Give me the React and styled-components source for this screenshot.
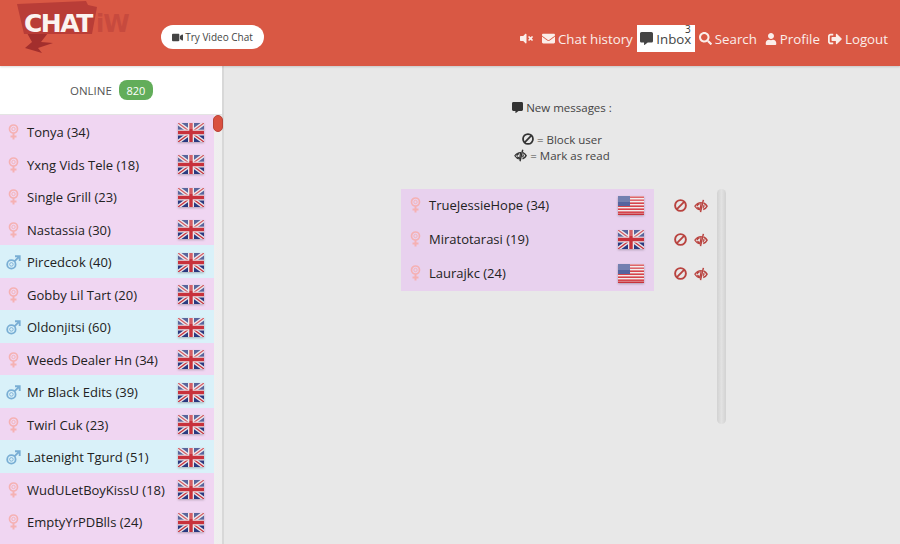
import React from "react";
import styled, { createGlobalStyle } from "styled-components";
import { FaVideo, FaEnvelope, FaCommentAlt, FaSearch, FaUser, FaSignOutAlt, FaVolumeMute } from "react-icons/fa";

const Global = createGlobalStyle`
  html, body {
    margin: 0;
    height: 100%;
    overflow: hidden;
    background: #e8e8e8;
    font-family: "Open Sans", "Noto Sans", sans-serif;
  }
`;

const users = [
  ["Tonya (34)", "f"],
  ["Yxng Vids Tele (18)", "f"],
  ["Single Grill (23)", "f"],
  ["Nastassia (30)", "f"],
  ["Pircedcok (40)", "m"],
  ["Gobby Lil Tart (20)", "f"],
  ["Oldonjitsi (60)", "m"],
  ["Weeds Dealer Hn (34)", "f"],
  ["Mr Black Edits (39)", "m"],
  ["Twirl Cuk (23)", "f"],
  ["Latenight Tgurd (51)", "m"],
  ["WudULetBoyKissU (18)", "f"],
  ["EmptyYrPDBlls (24)", "f"],
];

const inbox = [
  ["TrueJessieHope (34)", "us"],
  ["Miratotarasi (19)", "uk"],
  ["Laurajkc (24)", "us"],
];

const UkFlag = () => (
  <FlagSvg width="26" height="19" viewBox="0 0 26 19">
    <rect width="26" height="19" fill="#2b3a80" />
    <path d="M0 0L26 19M26 0L0 19" stroke="#e8e4ea" strokeWidth="4" />
    <path d="M0 0L26 19M26 0L0 19" stroke="#c8323c" strokeWidth="1.3" />
    <path d="M13 0V19M0 9.5H26" stroke="#e8e4ea" strokeWidth="6" />
    <path d="M13 0V19M0 9.5H26" stroke="#c8323c" strokeWidth="3.4" />
    <rect width="26" height="6" fill="#fff" opacity="0.22" />
  </FlagSvg>
);

const UsFlag = () => (
  <FlagSvg width="26" height="19" viewBox="0 0 26 19">
    <rect width="26" height="19" fill="#f1e9ea" />
    {[0, 3, 6, 9, 12, 15].map((y) => (
      <rect key={y} y={y + 0.4} width="26" height="1.6" fill="#d6444c" />
    ))}
    <rect y="17.4" width="26" height="1.6" fill="#c8323c" />
    <rect width="12" height="10" fill="#55649f" />
    <rect width="26" height="6" fill="#fff" opacity="0.18" />
  </FlagSvg>
);

const VenusIcon = () => (
  <svg width="11" height="16" viewBox="0 0 11 16" fill="none" stroke="#f5b1b3">
    <circle cx="5.5" cy="5" r="4" strokeWidth="1.7" />
    <circle cx="5.5" cy="5" r="1.7" strokeWidth="0.9" />
    <path d="M5.5 9V15.5M2.5 12.6H8.5" strokeWidth="2" />
  </svg>
);

const MarsIcon = () => (
  <svg width="15" height="15" viewBox="0 0 15 15" fill="none" stroke="#79aed4">
    <circle cx="5.4" cy="9.4" r="4.2" strokeWidth="1.8" />
    <circle cx="5.4" cy="9.4" r="1.8" strokeWidth="0.9" />
    <path d="M8.4 6.4L13.2 1.6M9 1.3H13.7V6" strokeWidth="1.9" />
  </svg>
);

const BanIcon = ({ size = 13 }) => (
  <svg width={size} height={size} viewBox="0 0 13 13" fill="none" stroke="currentColor" strokeWidth="1.9">
    <circle cx="6.5" cy="6.5" r="5.4" />
    <path d="M2.7 10.3L10.3 2.7" />
  </svg>
);

// half filled eye with a slash, the "mark as read" glyph
const EyeCloseIcon = ({ size = 14 }) => (
  <svg width={size} height={size} viewBox="0 0 14 14" fill="none" stroke="currentColor">
    <path d="M0.9 7.2C2.4 4.9 4.6 3.8 7.2 3.7L6 10.8C3.9 10.6 2.3 9.4 0.9 7.2Z" strokeWidth="1.2" />
    <path d="M3.2 7.2C3.2 5.9 4.2 5 5.6 5" strokeWidth="1.6" />
    <path d="M3.4 8.2C4 9 4.8 9.5 5.8 9.5" strokeWidth="1.6" />
    <path d="M9.4 0.8L6.5 13.2" strokeWidth="1.5" />
    <path d="M9.6 3.9C11.2 4.6 12.3 5.7 13 7.2C12.3 8.8 11.2 9.8 9.2 10.5" strokeWidth="1.6" />
    <path d="M9.8 6C10.2 6.9 10 7.8 9.1 8.7" strokeWidth="1.3" />
  </svg>
);

const Logo = () => (
  <LogoWrap>
    <LogoBanner viewBox="0 0 100 56" width="100" height="56">
      <path d="M27 33L48 33L41 42L53 43L38 48L42 53L25 48L32 42Z" fill="#a32f2d" />
      <path d="M17 4L86 1L88 5L97 7L92 34L24 34Z" fill="#b93d37" />
    </LogoBanner>
    <LogoText>CHAT</LogoText>
    <LogoSuffix>iW</LogoSuffix>
  </LogoWrap>
);

const App = () => {
  return (
    <Page>
      <Global />
      <Header>
        <Brand>
          <Logo />
          <VideoButton>
            <FaVideo size={11} />
            Try Video Chat
          </VideoButton>
        </Brand>
        <Nav>
          <SoundItem>
            <FaVolumeMute size={13} />
          </SoundItem>
          <NavItem>
            <FaEnvelope size={13} />
            Chat history
          </NavItem>
          <NavItem $active>
            <FaCommentAlt size={13} />
            Inbox
            <Badge>3</Badge>
          </NavItem>
          <NavItem>
            <FaSearch size={13} />
            Search
          </NavItem>
          <NavItem>
            <FaUser size={12} />
            Profile
          </NavItem>
          <NavItem>
            <FaSignOutAlt size={14} />
            Logout
          </NavItem>
        </Nav>
      </Header>
      <Body>
        <Sidebar>
          <OnlineBar>
            ONLINE
            <Count>820</Count>
          </OnlineBar>
          <ListArea>
            <UserList>
              {users.map(([name, gender]) => (
                <UserRow key={name} $gender={gender}>
                  <GenderSlot>{gender === "f" ? <VenusIcon /> : <MarsIcon />}</GenderSlot>
                  <UserName>{name}</UserName>
                  <UkFlag />
                </UserRow>
              ))}
            </UserList>
            <ScrollThumb />
          </ListArea>
        </Sidebar>
        <Main>
          <Heading>
            <FaCommentAlt size={11} />
            New messages :
          </Heading>
          <Legend>
            <LegendLine>
              <BanIcon size={12} /> = Block user
            </LegendLine>
            <LegendLine>
              <EyeCloseIcon size={13} /> = Mark as read
            </LegendLine>
          </Legend>
          <InboxBox>
            <InboxList>
              {inbox.map(([name, flag]) => (
                <InboxRow key={name}>
                  <InboxUser>
                    <GenderSlot>
                      <VenusIcon />
                    </GenderSlot>
                    <UserName>{name}</UserName>
                    {flag === "us" ? <UsFlag /> : <UkFlag />}
                  </InboxUser>
                  <Actions>
                    <BanIcon />
                    <EyeCloseIcon />
                  </Actions>
                </InboxRow>
              ))}
            </InboxList>
            <InboxTrack />
          </InboxBox>
        </Main>
      </Body>
    </Page>
  );
};

const Page = styled.div`
  width: 900px;
  height: 544px;
  overflow: hidden;
  display: flex;
  flex-direction: column;
`;

const Header = styled.header`
  height: 66px;
  flex: none;
  background: #d95844;
  display: flex;
  justify-content: space-between;
  box-shadow: 0 1px 2px rgba(0, 0, 0, 0.15);
  position: relative;
  z-index: 1;
`;

const Brand = styled.div`
  display: flex;
  align-items: flex-start;
`;

const LogoWrap = styled.div`
  position: relative;
  width: 161px;
  height: 66px;
  flex: none;
`;

const LogoBanner = styled.svg`
  position: absolute;
  left: 0;
  top: 0;
`;

const LogoText = styled.span`
  position: absolute;
  left: 24px;
  top: 6px;
  font: 700 25px/36px "DejaVu Sans", sans-serif;
  letter-spacing: -1.5px;
  color: #fbf3f0;
`;

const LogoSuffix = styled.span`
  position: absolute;
  left: 96px;
  top: 9px;
  font: 700 24px/30px "DejaVu Sans", sans-serif;
  letter-spacing: -1px;
  color: #c74a3e;
`;

const VideoButton = styled.div`
  margin-top: 25px;
  width: 103px;
  height: 24px;
  box-sizing: border-box;
  border-radius: 12px;
  background: #fff;
  color: #444;
  font-size: 10px;
  display: flex;
  align-items: center;
  justify-content: center;
  gap: 2px;
`;

const Nav = styled.nav`
  display: flex;
  align-items: flex-start;
  padding: 25px 8px 0 0;
`;

const NavItem = styled.div`
  position: relative;
  height: 27px;
  display: flex;
  align-items: center;
  gap: 3px;
  padding: 0 ${(p) => (p.$active ? "3.5px" : "4px")};
  font-size: 13.3px;
  color: ${(p) => (p.$active ? "#444" : "#fbeeea")};
  background: ${(p) => (p.$active ? "#fff" : "transparent")};
`;

const SoundItem = styled(NavItem)`
  padding: 0 4.5px 0 0;
`;

const Badge = styled.span`
  position: absolute;
  right: 4px;
  top: -1px;
  font-size: 10px;
  line-height: 11px;
  color: #333;
`;

const Body = styled.div`
  flex: 1;
  display: flex;
  min-height: 0;
`;

const Sidebar = styled.aside`
  width: 224px;
  flex: none;
  background: #fff;
  border-right: 2px solid #d8d8d8;
  box-sizing: border-box;
  display: flex;
  flex-direction: column;
`;

const OnlineBar = styled.div`
  height: 49px;
  flex: none;
  box-sizing: border-box;
  padding-left: 70px;
  border-bottom: 1px solid #e4e4e4;
  display: flex;
  align-items: center;
  gap: 7px;
  font-size: 11.5px;
  color: #555;
`;

const Count = styled.span`
  width: 34px;
  height: 20px;
  border-radius: 8px;
  background: #62ad5a;
  color: #fff;
  font-size: 11px;
  display: flex;
  align-items: center;
  justify-content: center;
`;

const ListArea = styled.div`
  position: relative;
  flex: 1;
  display: flex;
  min-height: 0;
  background: linear-gradient(90deg, #eee, #fcfcfc 50%, #eee);
`;

const UserList = styled.div`
  width: 214px;
  flex: none;
  background: #f0d6f2;
`;

const UserRow = styled.div`
  height: 32.5px;
  box-sizing: border-box;
  padding: 2px 10.5px 0 6px;
  display: flex;
  align-items: center;
  background: ${(p) => (p.$gender === "f" ? "#f0d6f2" : "#d9f1f9")};
`;

const GenderSlot = styled.span`
  width: 15px;
  margin-right: 6px;
  flex: none;
  display: flex;
  justify-content: center;
`;

const UserName = styled.span`
  flex: 1;
  font-size: 13px;
  color: #222;
  white-space: nowrap;
`;

const FlagSvg = styled.svg`
  flex: none;
  filter: drop-shadow(0 1px 1px rgba(0, 0, 0, 0.25));
`;

const ScrollThumb = styled.div`
  position: absolute;
  left: 213px;
  top: 0;
  width: 10px;
  height: 17px;
  box-sizing: border-box;
  border: 1px solid #b9443a;
  border-radius: 5px;
  background: #d9503f;
`;

const Main = styled.main`
  flex: 1;
  display: flex;
  flex-direction: column;
  align-items: center;
  color: #555;
  font-size: 11.5px;
`;

const Heading = styled.div`
  margin-top: 32px;
  height: 18px;
  display: flex;
  align-items: center;
  gap: 3px;
  color: #444;
  svg {
    color: #333;
  }
`;

const Legend = styled.div`
  margin-top: 15px;
  display: flex;
  flex-direction: column;
  align-items: center;
  color: #444;
`;

const LegendLine = styled.div`
  height: 16px;
  display: flex;
  align-items: center;
  gap: 3px;
  svg {
    color: #333;
  }
`;

const InboxBox = styled.div`
  margin-top: 26px;
  margin-left: 3px;
  width: 325px;
  display: flex;
  justify-content: space-between;
`;

const InboxList = styled.div`
  width: 310px;
`;

const InboxRow = styled.div`
  height: 34px;
  display: flex;
  align-items: center;
`;

const InboxUser = styled.div`
  width: 253px;
  height: 100%;
  flex: none;
  box-sizing: border-box;
  padding: 0 10px 2px 7px;
  display: flex;
  align-items: center;
  background: #e8d1ee;
`;

const Actions = styled.div`
  margin-left: 20px;
  padding-bottom: 1px;
  display: flex;
  align-items: center;
  gap: 7px;
  color: #b9433f;
`;

const InboxTrack = styled.div`
  width: 9px;
  height: 235px;
  border-radius: 5px;
  background: linear-gradient(90deg, #d2d2d2, #e2e2e2 50%, #d2d2d2);
`;

export default App;
